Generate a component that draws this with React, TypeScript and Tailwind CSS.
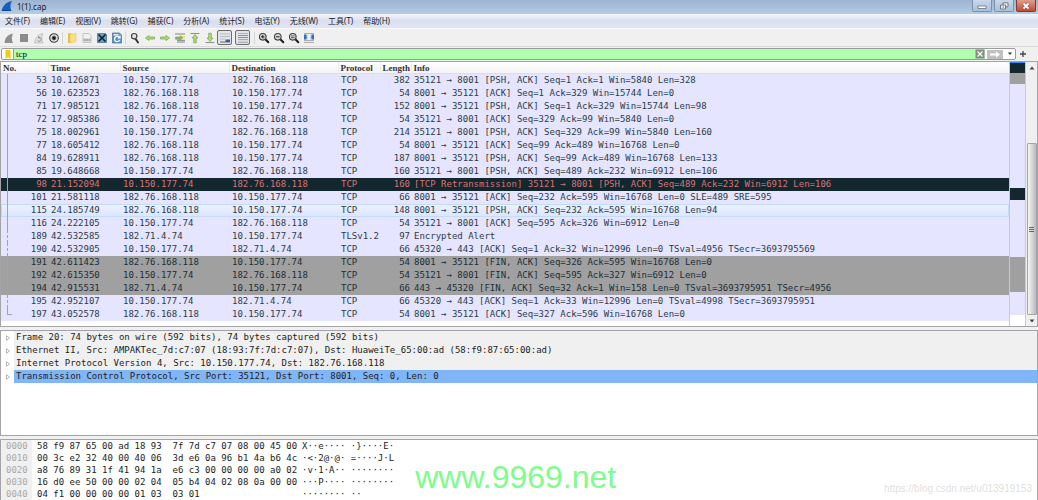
import { useState } from "react";
import type { ReactNode } from "react";

interface Packet {
  no: number;
  time: string;
  src: string;
  dst: string;
  protocol: string;
  length: number;
  info: string;
  kind?: "bad" | "fin" | "hover";
  trace?: "dashed" | "end";
}

const A = "10.150.177.74";
const B = "182.76.168.118";
const C = "182.71.4.74";

const packets: Packet[] = [
  { no: 53, time: "10.126871", src: A, dst: B, protocol: "TCP", length: 382, info: "35121 → 8001 [PSH, ACK] Seq=1 Ack=1 Win=5840 Len=328" },
  { no: 56, time: "10.623523", src: B, dst: A, protocol: "TCP", length: 54, info: "8001 → 35121 [ACK] Seq=1 Ack=329 Win=15744 Len=0" },
  { no: 71, time: "17.985121", src: B, dst: A, protocol: "TCP", length: 152, info: "8001 → 35121 [PSH, ACK] Seq=1 Ack=329 Win=15744 Len=98" },
  { no: 72, time: "17.985386", src: A, dst: B, protocol: "TCP", length: 54, info: "35121 → 8001 [ACK] Seq=329 Ack=99 Win=5840 Len=0" },
  { no: 75, time: "18.002961", src: A, dst: B, protocol: "TCP", length: 214, info: "35121 → 8001 [PSH, ACK] Seq=329 Ack=99 Win=5840 Len=160" },
  { no: 77, time: "18.605412", src: B, dst: A, protocol: "TCP", length: 54, info: "8001 → 35121 [ACK] Seq=99 Ack=489 Win=16768 Len=0" },
  { no: 84, time: "19.628911", src: B, dst: A, protocol: "TCP", length: 187, info: "8001 → 35121 [PSH, ACK] Seq=99 Ack=489 Win=16768 Len=133" },
  { no: 85, time: "19.648668", src: A, dst: B, protocol: "TCP", length: 160, info: "35121 → 8001 [PSH, ACK] Seq=489 Ack=232 Win=6912 Len=106" },
  { no: 98, time: "21.152094", src: A, dst: B, protocol: "TCP", length: 160, info: "[TCP Retransmission] 35121 → 8001 [PSH, ACK] Seq=489 Ack=232 Win=6912 Len=106", kind: "bad" },
  { no: 101, time: "21.581118", src: B, dst: A, protocol: "TCP", length: 66, info: "8001 → 35121 [ACK] Seq=232 Ack=595 Win=16768 Len=0 SLE=489 SRE=595" },
  { no: 115, time: "24.185749", src: B, dst: A, protocol: "TCP", length: 148, info: "8001 → 35121 [PSH, ACK] Seq=232 Ack=595 Win=16768 Len=94", kind: "hover" },
  { no: 116, time: "24.222105", src: A, dst: B, protocol: "TCP", length: 54, info: "35121 → 8001 [ACK] Seq=595 Ack=326 Win=6912 Len=0" },
  { no: 189, time: "42.532585", src: C, dst: A, protocol: "TLSv1.2", length: 97, info: "Encrypted Alert", trace: "dashed" },
  { no: 190, time: "42.532905", src: A, dst: C, protocol: "TCP", length: 66, info: "45320 → 443 [ACK] Seq=1 Ack=32 Win=12996 Len=0 TSval=4956 TSecr=3693795569", trace: "dashed" },
  { no: 191, time: "42.611423", src: B, dst: A, protocol: "TCP", length: 54, info: "8001 → 35121 [FIN, ACK] Seq=326 Ack=595 Win=16768 Len=0", kind: "fin" },
  { no: 192, time: "42.615350", src: A, dst: B, protocol: "TCP", length: 54, info: "35121 → 8001 [FIN, ACK] Seq=595 Ack=327 Win=6912 Len=0", kind: "fin" },
  { no: 194, time: "42.915531", src: C, dst: A, protocol: "TCP", length: 66, info: "443 → 45320 [FIN, ACK] Seq=32 Ack=1 Win=158 Len=0 TSval=3693795951 TSecr=4956", kind: "fin", trace: "dashed" },
  { no: 195, time: "42.952107", src: A, dst: C, protocol: "TCP", length: 66, info: "45320 → 443 [ACK] Seq=1 Ack=33 Win=12996 Len=0 TSval=4998 TSecr=3693795951", trace: "dashed" },
  { no: 197, time: "43.052578", src: B, dst: A, protocol: "TCP", length: 54, info: "8001 → 35121 [ACK] Seq=327 Ack=596 Win=16768 Len=0", trace: "end" },
];

const rowStyle = {
  normal: "bg-[#e5e5ff] text-[#2c3c46]",
  bad: "bg-[#12272e] text-[#d87476]",
  fin: "bg-[#a0a0a0] text-[#1c2e36]",
  hover: "bg-linear-to-b from-[#eef2ff] to-[#dbe5ff] text-[#2c3c46] shadow-[inset_0_0_0_1px_#c3dcfb]",
};

const traceStyle = {
  solid: "h-[13px] border-l",
  dashed: "h-[13px] border-l border-dashed",
  end: "h-[7px] border-l border-b",
};

const menus = ["文件(F)", "编辑(E)", "视图(V)", "跳转(G)", "捕获(C)", "分析(A)", "统计(S)", "电话(Y)", "无线(W)", "工具(T)", "帮助(H)"];

const details = [
  "Frame 20: 74 bytes on wire (592 bits), 74 bytes captured (592 bits)",
  "Ethernet II, Src: AMPAKTec_7d:c7:07 (18:93:7f:7d:c7:07), Dst: HuaweiTe_65:00:ad (58:f9:87:65:00:ad)",
  "Internet Protocol Version 4, Src: 10.150.177.74, Dst: 182.76.168.118",
  "Transmission Control Protocol, Src Port: 35121, Dst Port: 8001, Seq: 0, Len: 0",
];

const hexRows = [
  ["0000", "58 f9 87 65 00 ad 18 93", "7f 7d c7 07 08 00 45 00", "X··e···· ·}····E·"],
  ["0010", "00 3c e2 32 40 00 40 06", "3d e6 0a 96 b1 4a b6 4c", "·<·2@·@· =····J·L"],
  ["0020", "a8 76 89 31 1f 41 94 1a", "e6 c3 00 00 00 00 a0 02", "·v·1·A·· ········"],
  ["0030", "16 d0 ee 50 00 00 02 04", "05 b4 04 02 08 0a 00 00", "···P···· ········"],
  ["0040", "04 f1 00 00 00 00 01 03", "03 01", "········ ··"],
];

// colour strip next to the packet list
const strip = [
  "h-px bg-[#2f8bf5]",
  "h-[10px] bg-[#12272e]",
  "h-[11px] bg-[#a0a0a0]",
  "h-[104px] bg-[#e5e5ff]",
  "h-[12px] bg-[#12272e]",
  "h-[57px] bg-[#e5e5ff]",
  "h-[35px] bg-[#a0a0a0]",
  "h-[23px] bg-[#e5e5ff]",
];

function Icon({ children }: { children: ReactNode }) {
  return (
    <svg viewBox="0 0 12 12" className="size-3" fill="none" aria-hidden="true">
      {children}
    </svg>
  );
}

function Lens({ children }: { children?: ReactNode }) {
  return (
    <Icon>
      <path d="M7.3 7.3 10.3 10.3" stroke="#1e1e1e" strokeWidth="2" strokeLinecap="round" />
      <circle cx="4.8" cy="4.8" r="3.3" fill="#d8dcdf" stroke="#3c3c3c" strokeWidth="1.1" />
      {children}
    </Icon>
  );
}

function Page({ children }: { children: ReactNode }) {
  return (
    <Icon>
      <path d="M2 1.5h6l2 2v7H2z" fill="#f2f2f2" stroke="#b9b9b9" strokeWidth=".8" />
      {children}
    </Icon>
  );
}

const tools: { label: string; icon: ReactNode; pressed?: boolean; sep?: boolean }[] = [
  { label: "Start capture", icon: <Icon><path d="M1.5 11C2 6 4.500 2.500 10 1.500 8.500 4.500 8.500 8 10 11z" fill="#8f8f8f" /></Icon> },
  { label: "Stop capture", icon: <Icon><path d="M2 2h8v8H2z" fill="#8c8c8c" /></Icon> },
  {
    label: "Restart capture",
    icon: (
      <Icon>
        <path d="M1.500 11C2 6 4.500 2.500 10 1.500 8.500 4.500 8.500 8 10 11z" fill="#dedede" stroke="#b4b4b4" strokeWidth=".6" />
        <path d="M4.500 8.500a2 2 0 1 0 1-3M5.500 4v2h2" stroke="#909090" strokeWidth=".9" />
      </Icon>
    ),
  },
  {
    label: "Capture options",
    icon: (
      <Icon>
        <circle cx="6" cy="6" r="4.300" fill="#e8e8e8" stroke="#3a3a3a" strokeWidth="1.100" />
        <circle cx="6" cy="6" r="2.400" fill="#777" />
        <circle cx="6" cy="6" r="1.500" fill="#151515" />
      </Icon>
    ),
  },
  {
    label: "Open",
    sep: true,
    icon: (
      <Icon>
        <path d="M2 1.500 5 1v10H2z" fill="#e9bd45" />
        <path d="M4 2.500 10 1.500v8L4 11z" fill="#fbdf86" stroke="#e3b950" strokeWidth=".5" />
      </Icon>
    ),
  },
  {
    label: "Save",
    icon: (
      <Page>
        <path d="M2 6.500h8v3H2z" fill="#c4c4c4" />
        <path d="M3 8h1.500M5.500 8H7M8 8h1" stroke="#8b8b8b" strokeWidth="1.200" />
      </Page>
    ),
  },
  {
    label: "Close file",
    icon: (
      <Icon>
        <path d="M1.500 1.500h8l1 1v8h-9z" fill="#6aa3c9" stroke="#52758d" strokeWidth=".8" />
        <path d="M2.500 2.500 9.500 9.500M9.500 2.500 2.500 9.500" stroke="#151d22" strokeWidth="1.600" />
      </Icon>
    ),
  },
  {
    label: "Reload file",
    icon: (
      <Icon>
        <path d="M1.500 1h7l2 2v8h-9z" fill="#5b95c8" stroke="#416f98" strokeWidth=".7" />
        <path d="M2.500 2h5v1.500h-5z" fill="#e6f1fa" />
        <path d="M8.500 5.500A2.700 2.700 0 1 0 8.700 8M9 3.600v2.300H6.700" stroke="#fff" strokeWidth="1.200" />
      </Icon>
    ),
  },
  {
    label: "Find packet",
    sep: true,
    icon: (
      <Icon>
        <path d="M6.500 6.800 9 10.500" stroke="#333" strokeWidth="2" strokeLinecap="round" />
        <circle cx="5.200" cy="4.200" r="2.700" fill="#e4e4e4" stroke="#444" strokeWidth="1.200" />
      </Icon>
    ),
  },
  { label: "Previous packet", icon: <Icon><path d="M1.500 6 5 3.500V5h5.500v2H5v1.500z" fill="#a5e06a" stroke="#7ba05a" strokeWidth=".7" /></Icon> },
  { label: "Next packet", icon: <Icon><path d="M10.500 6 7 3.500V5H1.500v2H7v1.500z" fill="#a5e06a" stroke="#7ba05a" strokeWidth=".7" /></Icon> },
  {
    label: "Go to packet",
    icon: (
      <Icon>
        <path d="M1 2h10M3 10h8M3 8.300h8" stroke="#77756b" strokeWidth=".9" />
        <path d="M6 4h5v2H6z" fill="#f3e466" />
        <path d="M1 5.500h5M1 7h5" stroke="#7b7b7b" strokeWidth=".8" />
        <path d="M9 5.800 6 3.800v1.200H2v1.600h4v1.200z" fill="#82cc4b" stroke="#68885a" strokeWidth=".5" />
      </Icon>
    ),
  },
  {
    label: "First packet",
    icon: (
      <Icon>
        <path d="M1.500 1.500h9" stroke="#929292" strokeWidth="1.100" />
        <path d="M6 2.500 9 6H7.300v4.800H4.700V6H3z" fill="#a5e06a" stroke="#7ba05a" strokeWidth=".7" />
      </Icon>
    ),
  },
  {
    label: "Last packet",
    icon: (
      <Icon>
        <path d="M1.500 10.500h9" stroke="#929292" strokeWidth="1.100" />
        <path d="M6 9.500 9 6H7.300V1.200H4.700V6H3z" fill="#a5e06a" stroke="#7ba05a" strokeWidth=".7" />
      </Icon>
    ),
  },
  {
    label: "Auto scroll",
    pressed: true,
    icon: (
      <Icon>
        <path d="M1 2h10M1 4.500h10M1 7h5" stroke="#b5b5b5" strokeWidth=".8" />
        <path d="M1 10h10" stroke="#4b4b4b" strokeWidth=".8" />
        <path d="M6.500 7.500H11V10H6.500z" fill="#2f63a8" />
      </Icon>
    ),
  },
  {
    label: "Colorize",
    pressed: true,
    icon: (
      <Icon>
        <path d="M1 1.500h10M1 10.500h10" stroke="#999" strokeWidth=".7" />
        <path d="M1 3.500h10" stroke="#ee6a6a" />
        <path d="M1 5.500h10" stroke="#6f8ce6" />
        <path d="M1 7.500h10" stroke="#ee8c8c" />
        <path d="M1 9.200h10" stroke="#b8b0d4" strokeWidth=".6" />
      </Icon>
    ),
  },
  { label: "Zoom in", sep: true, icon: <Lens><path d="M3 4.800h3.600M4.800 3v3.600" stroke="#222" /></Lens> },
  { label: "Zoom out", icon: <Lens><path d="M3 4.800h3.600" stroke="#222" /></Lens> },
  { label: "Normal size", icon: <Lens><path d="M3 4h3.600M3 5.700h3.600" stroke="#444" strokeWidth=".8" /></Lens> },
  {
    label: "Resize columns",
    icon: (
      <Icon>
        <path d="M1 1.500h10M1 10.500h10M1 8.500h10" stroke="#9a9a9a" strokeWidth=".8" />
        <path d="M4.300 1v10M7.700 1v10" stroke="#bbb" strokeWidth=".6" />
        <path d="M1.300 3v4.500L4 5.200zM10.700 3v4.500L8 5.200z" fill="#2765b4" />
        <path d="M1 2.500h2.500v5H1zM8.500 2.500H11v5H8.500z" fill="#2f6fbd" />
      </Icon>
    ),
  },
];

function TitleBar() {
  return (
    <header className="flex h-[14px] items-start bg-linear-to-b from-[#9cb4d0] to-[#b5cce5] pr-[2px]">
      <svg viewBox="0 0 12 12" className="ml-px size-3" aria-hidden="true">
        <path d="M.5 11C1.500 6 5 2 11 1 9 4 9 8 10.500 11z" fill="#1560bd" />
        <path d="M.5 11c3-1.500 7-1.500 10 0z" fill="#0b3f8c" />
      </svg>
      <h1 className="ml-[4px] flex-1 text-[8px] leading-[13px] text-[#1a1a1a]">1(1).cap</h1>
      <div className="flex gap-[2px]">
        <button aria-label="Minimize" className="flex h-[12px] w-[20px] items-center justify-center rounded-b-[2px] border border-t-0 border-[#7d90a8] bg-linear-to-b from-[#c9d8ea] to-[#a9c0db]">
          <svg viewBox="0 0 10 8" className="h-2 w-2.5"><path d="M1 4h8v2.500H1z" fill="#fff" stroke="#59636f" strokeWidth=".7" /></svg>
        </button>
        <button aria-label="Restore" className="flex h-[12px] w-[20px] items-center justify-center rounded-b-[2px] border border-t-0 border-[#7d90a8] bg-linear-to-b from-[#c9d8ea] to-[#a9c0db]">
          <svg viewBox="0 0 10 8" className="h-2 w-2.5">
            <path d="M4 .8h5v4H4z" fill="#eee" stroke="#59636f" strokeWidth=".8" />
            <path d="M1.500 3h5v4h-5z" fill="#eee" stroke="#59636f" strokeWidth=".8" />
            <path d="M3.500 4.500h1.300v1H3.500z" fill="#59636f" />
          </svg>
        </button>
        <button aria-label="Close" className="flex h-[12px] w-[20px] items-center justify-center rounded-b-[2px] border border-t-0 border-[#7c3a34] bg-linear-to-b from-[#dd9c8d] to-[#c34a30]">
          <svg viewBox="0 0 10 8" className="h-2 w-2.5">
            <path d="M2.500 1.500 7.500 6.500M7.500 1.500 2.500 6.500" stroke="#6b4a4a" strokeWidth="2.800" />
            <path d="M2.500 1.500 7.500 6.500M7.500 1.500 2.500 6.500" stroke="#fff" strokeWidth="1.800" />
          </svg>
        </button>
      </div>
    </header>
  );
}

function FilterBar() {
  const [filter, setFilter] = useState("tcp");

  return (
    <div className="flex h-[15px] items-center gap-[4px] border-t border-[#dcdcdc] pl-px pr-[12px]">
      <div className="flex h-[12px] flex-1 items-center rounded-[2px] border border-[#9b9b9b] bg-white">
        <button aria-label="Bookmarks" className="flex h-[10px] w-[12px] items-center justify-center border-r border-[#9b9b9b]">
          <svg viewBox="0 0 6 9" className="h-[9px] w-[6px]"><path d="M.5 0h5v9L3 7 .5 9z" fill="#f2cd0c" /></svg>
        </button>
        <input
          aria-label="Display filter"
          value={filter}
          autoFocus
          onChange={(e) => setFilter(e.target.value)}
          className="h-[10px] min-w-0 flex-1 bg-[#afffaf] px-[2px] font-['Liberation_Serif',serif] text-[9px] leading-[10px] text-black outline-none"
        />
        <button aria-label="Clear filter" className="h-[10px] bg-[#afffaf]">
          <svg viewBox="0 0 10 10" className="size-2.5">
            <path d="M.5.500h9v9h-9z" fill="#858b85" />
            <path d="M2.500 2.500 7.500 7.500M7.500 2.500 2.500 7.500" stroke="#fff" strokeWidth="1.200" />
          </svg>
        </button>
        <button aria-label="Apply filter" className="mx-[2px]">
          <svg viewBox="0 0 16 9" className="h-[9px] w-4">
            <path d="M0 0h16v9H0z" fill="#c0c0c0" />
            <path d="M3 3.500h6V1.500L13 4.500 9 7.500V5.500H3z" fill="#fff" />
          </svg>
        </button>
        <button aria-label="Recent filters" className="flex w-[10px] justify-center">
          <svg viewBox="0 0 6 4" className="h-1 w-1.5"><path d="M1 .5h4L3 3z" fill="#333" /></svg>
        </button>
      </div>
      <button aria-label="Add filter button">
        <svg viewBox="0 0 6 6" className="size-1.5"><path d="M0 3h6M3 0v6" stroke="#444" strokeWidth="1.300" /></svg>
      </button>
    </div>
  );
}

function PacketList() {
  const th = "border-l border-[#ebebeb] p-0 pl-[2px] font-bold";

  return (
    <section className="flex border border-[#a3a3a8]">
      <div className="min-w-0 flex-1 bg-white pb-[5px]">
        <table className="w-full table-fixed text-left">
          <colgroup>
            <col className="w-[47px]" />
            <col className="w-[72px]" />
            <col className="w-[109px]" />
            <col className="w-[109px]" />
            <col className="w-[42px]" />
            <col className="w-[31px]" />
            <col />
          </colgroup>
          <thead>
            <tr className="h-[12px] bg-linear-to-b from-white to-[#f3f3f5] font-['Liberation_Serif',serif] text-[9px] leading-[11px] text-[#333] shadow-[inset_0_-1px_0_#dedee2]">
              <th className="p-0 pl-[2px] font-bold">No.</th>
              <th className={th}>Time</th>
              <th className={th}>Source</th>
              <th className={th}>Destination</th>
              <th className={th}>Protocol</th>
              <th className={th}>Length</th>
              <th className={th}>Info</th>
            </tr>
          </thead>
          <tbody>
            {packets.map((p) => (
              <tr key={p.no} className={`h-[13px] whitespace-pre leading-[13px] ${rowStyle[p.kind ?? "normal"]}`}>
                <td className="p-0">
                  <div className="flex justify-between pl-[6px] pr-px">
                    <span className={`w-[5px] border-[#a2a2ac] ${traceStyle[p.trace ?? "solid"]}`} />
                    {p.no}
                  </div>
                </td>
                <td className="p-0 pl-[3px]">{p.time}</td>
                <td className="p-0 pl-[3px]">{p.src}</td>
                <td className="p-0 pl-[3px]">{p.dst}</td>
                <td className="p-0 pl-[3px]">{p.protocol}</td>
                <td className="p-0 pr-px text-right">{p.length}</td>
                <td className="overflow-hidden p-0 pl-[3px]">{p.info}</td>
              </tr>
            ))}
          </tbody>
        </table>
      </div>
      <div className="flex w-[17px] flex-col border-x border-[#cacace] bg-white">
        {strip.map((s) => (
          <div key={s} className={s} />
        ))}
      </div>
      <div className="flex w-[11px] flex-col items-center bg-[#f0f0f0]">
        <button aria-label="Scroll up" className="flex h-[11px] items-center">
          <svg viewBox="0 0 6 4" className="h-1 w-1.5"><path d="M.5 3.500h5L3 .5z" fill="#444" /></svg>
        </button>
        <div className="h-[70px]" />
        <div className="flex w-[10px] flex-1 flex-col items-center justify-center gap-px rounded-[1px] border border-[#a4a4a6] bg-linear-to-r from-[#f6f6f6] to-[#b9b9bc]">
          <span className="h-px w-[5px] bg-[#666]" />
          <span className="h-px w-[5px] bg-[#666]" />
          <span className="h-px w-[5px] bg-[#666]" />
        </div>
        <button aria-label="Scroll down" className="flex h-[11px] items-center">
          <svg viewBox="0 0 6 4" className="h-1 w-1.5"><path d="M.5.500h5L3 3.500z" fill="#444" /></svg>
        </button>
      </div>
    </section>
  );
}

function PacketDetails() {
  const [selected, setSelected] = useState(3);

  return (
    <section className="mt-[3px] h-[106px] border border-[#a3a3a8] bg-white text-[#222]">
      <ul>
        {details.map((line, i) => (
          <li key={line} className="flex h-[13px] leading-[13px]" onClick={() => setSelected(i)}>
            <button aria-label="Expand" className="flex w-[13px] items-center justify-center">
              <svg viewBox="0 0 4 6" className="h-1.5 w-1"><path d="M.5.700 3.500 3 .5 5.300z" fill="#fff" stroke="#a5a5a5" strokeWidth=".8" /></svg>
            </button>
            <span className={`flex-1 whitespace-pre pl-[2px] ${i === selected ? "bg-[#80b5f7]" : "bg-[#f0f0f0]"}`}>{line}</span>
          </li>
        ))}
      </ul>
    </section>
  );
}

function PacketBytes() {
  return (
    <section className="mt-[3px] flex-1 border border-b-0 border-[#a3a3a8] bg-white text-[#222]">
      {hexRows.map(([offset, left, right, ascii]) => (
        <div key={offset} className="flex h-[12px] whitespace-pre leading-[12px]">
          <span className="w-[31px] bg-[#f0f0f0] pl-[5px] text-[#a8a8a8]">{offset}</span>
          <span className="w-[270px] pl-[5px]">{`${left}  ${right}`}</span>
          <span>{ascii}</span>
        </div>
      ))}
    </section>
  );
}

export default function App() {
  return (
    <div className="relative flex min-h-screen flex-col overflow-hidden bg-[#f0f0f0] font-['Noto_Sans','Noto_Sans_CJK_SC',sans-serif]">
      <TitleBar />
      <nav className="flex h-[14px] items-center bg-linear-to-b from-[#f4f6fb] via-[#d9dff0] to-[#e0e5f4] text-[8px] leading-[14px] text-[#222]">
        {menus.map((m) => (
          <button key={m} className="px-[5px]">
            {m}
          </button>
        ))}
      </nav>
      <div className="flex h-[18px] items-center border-t border-[#fafafa] pl-px" role="toolbar">
        {tools.map((t) => (
          <div key={t.label} className={`flex items-center ${t.pressed ? "mr-[3px]" : ""}`}>
            {t.sep && <span className="mx-px h-[12px] w-px bg-[#d4d4d4]" />}
            <button
              aria-label={t.label}
              className={`flex h-[15px] w-[15px] items-center justify-center ${t.pressed ? "rounded-[2px] border border-[#6d6d6d] bg-[#e2e4ea]" : ""}`}
            >
              {t.icon}
            </button>
          </div>
        ))}
      </div>
      <FilterBar />
      <main className="flex flex-1 flex-col font-['DejaVu_Sans_Mono',monospace] text-[9px]">
        <PacketList />
        <PacketDetails />
        <PacketBytes />
      </main>
      <p className="absolute bottom-[4px] left-[40%] font-['Liberation_Sans',sans-serif] text-[32px] leading-[38px] text-[#7dfd8c]">www.9969.net</p>
      <p className="absolute bottom-[5px] right-[6px] font-['Liberation_Sans',sans-serif] text-[10px] leading-[12px] text-[#dfdfdf]">
        https://blog.csdn.net/u013919153
      </p>
    </div>
  );
}
